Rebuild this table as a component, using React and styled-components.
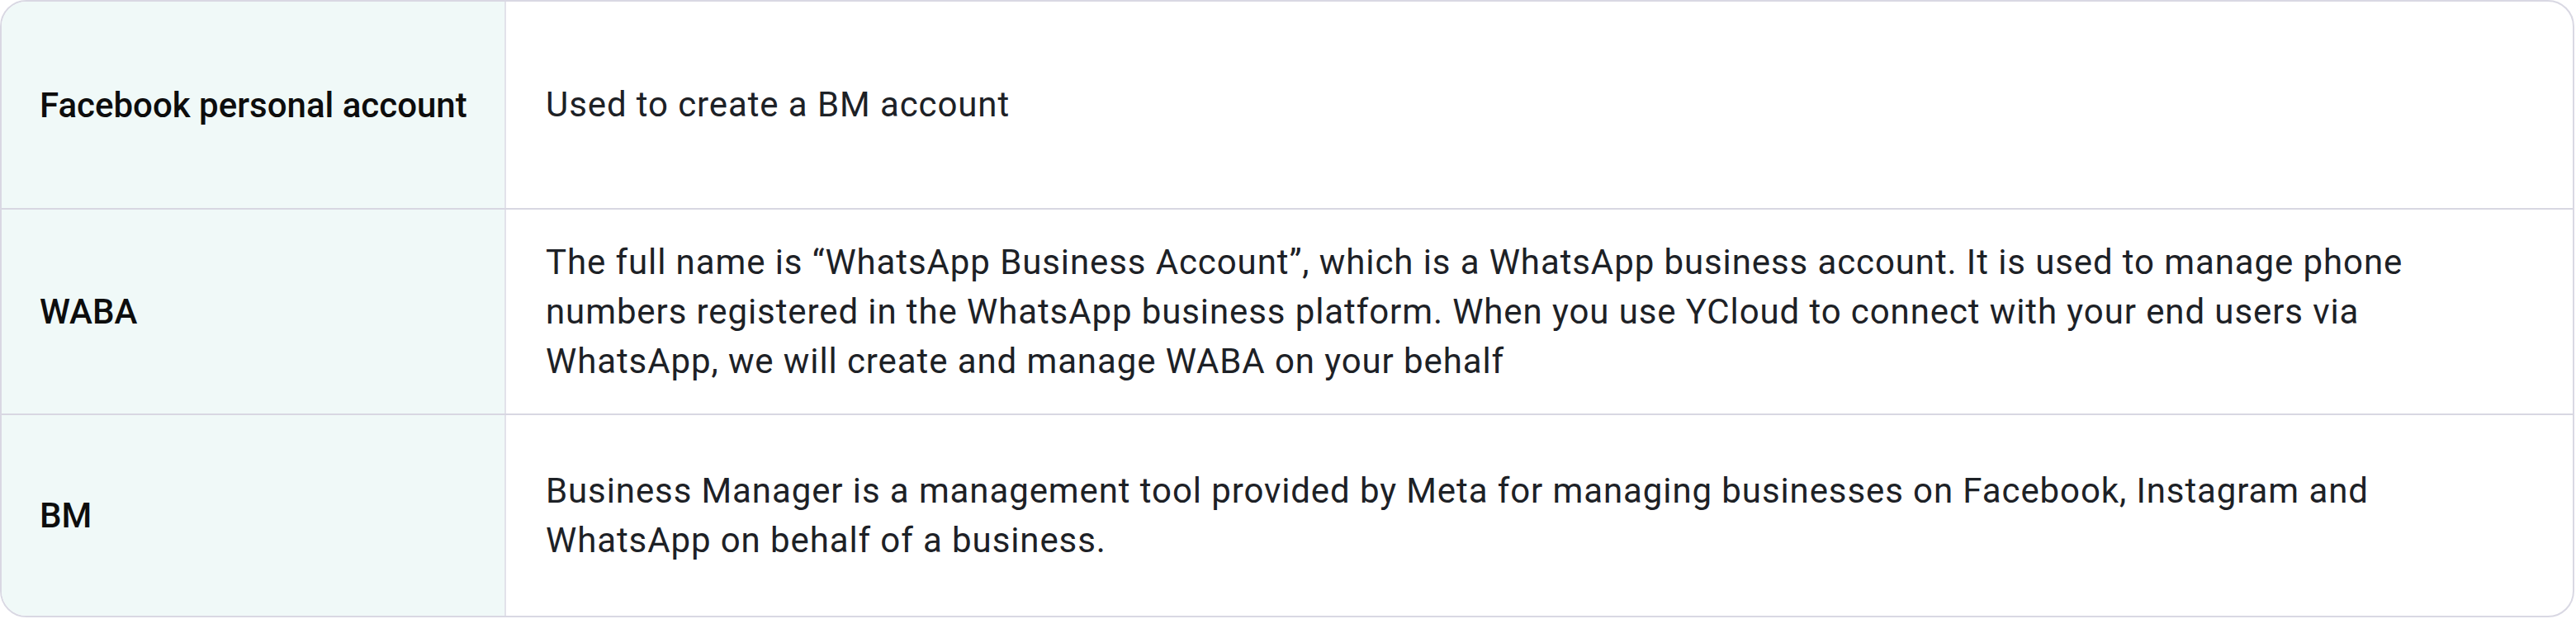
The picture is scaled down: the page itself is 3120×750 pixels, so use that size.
import React from "react";
import styled, { createGlobalStyle } from "styled-components";

const rows = [
  {
    term: "Facebook personal account",
    text: "Used to create a BM account",
  },
  {
    term: "WABA",
    text: "The full name is \u201cWhatsApp Business Account\u201d, which is a WhatsApp business account. It is used to manage phone numbers registered in the WhatsApp business platform. When you use YCloud to connect with your end users via WhatsApp, we will create and manage WABA on your behalf",
  },
  {
    term: "BM",
    text: "Business Manager is a management tool provided by Meta for managing businesses on Facebook, Instagram and WhatsApp on behalf of a business.",
  },
];

const App = () => {
  return (
    <>
      <GlobalStyle />
      <Table>
        {rows.map((row, i) => (
          <Row key={row.term} first={i === 0}>
            <Term>{row.term}</Term>
            <Desc>{row.text}</Desc>
          </Row>
        ))}
      </Table>
    </>
  );
};

export default App;

const GlobalStyle = createGlobalStyle`
  html, body {
    margin: 0;
    padding: 0;
    background: #ffffff;
  }
  body {
    font-family: Roboto, "Liberation Sans", sans-serif;
  }
`;

const Table = styled.div`
  box-sizing: border-box;
  width: 3118px;
  height: 748px;
  border: 2px solid #d9d8e3;
  border-radius: 32px;
  overflow: hidden;
  display: grid;
  grid-template-rows: 250px 249px 1fr;
`;

const Row = styled.div`
  display: grid;
  grid-template-columns: 611px 1fr;
  border-top: ${(p) => (p.first ? "none" : "2px solid #d8d7e2")};
`;

const Term = styled.div`
  display: flex;
  align-items: center;
  padding: 0 0 0 46px;
  background: #f0f9f8;
  border-right: 2px solid #e2e2ea;
  color: #0d0d0d;
  font-size: 42px;
  font-weight: 500;
  white-space: nowrap;
`;

const Desc = styled.div`
  display: flex;
  align-items: center;
  padding: 0 100px 0 48px;
  color: #1d2126;
  font-size: 42px;
  line-height: 60px;
  letter-spacing: 0.9px;
`;
